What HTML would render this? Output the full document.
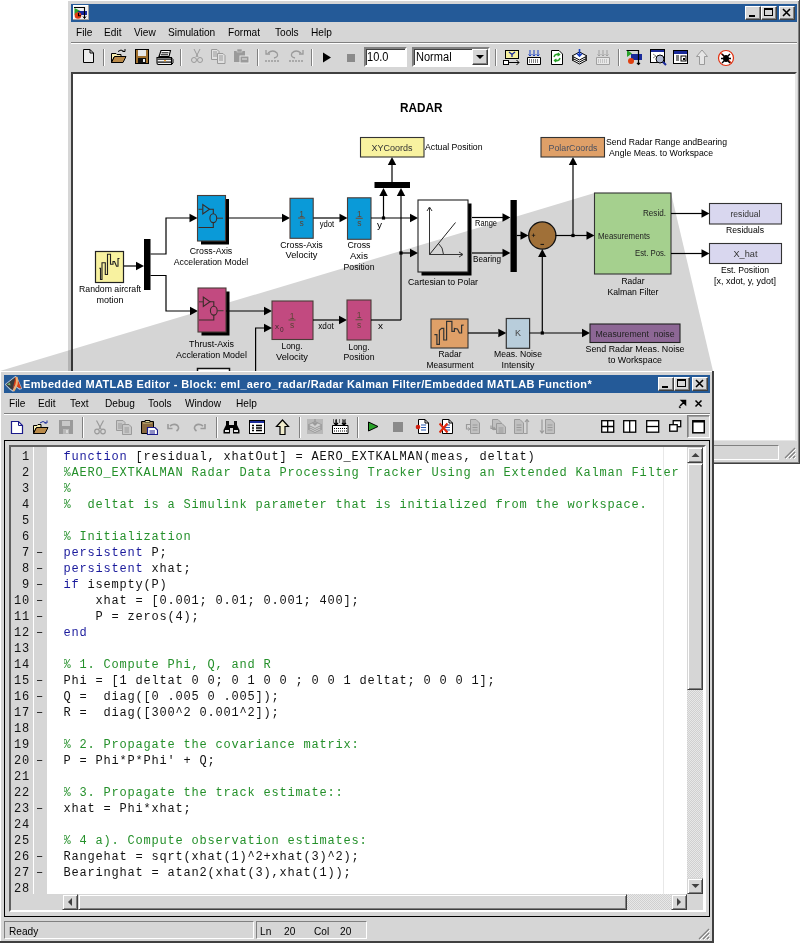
<!DOCTYPE html>
<html><head><meta charset="utf-8">
<style>
*{margin:0;padding:0;box-sizing:border-box}
html,body{width:800px;height:943px;overflow:hidden;background:#fff;font-family:"Liberation Sans",sans-serif;}
.abs{position:absolute}
.win{position:absolute;background:#d6d6d6;}
.title{position:absolute;background:#245a98;}
.tb{position:absolute;width:16px;height:14px;background:#d6d6d6;border:1px solid;border-color:#fff #404040 #404040 #fff;box-shadow:inset -1px -1px 0 #808080;}
.mi{position:absolute;font-size:11px;color:#000;line-height:12px;white-space:nowrap;transform:scaleX(0.92);transform-origin:0 0}
.sep{position:absolute;height:2px;border-top:1px solid #808080;border-bottom:1px solid #fff}
.vsep{position:absolute;width:2px;border-left:1px solid #808080;border-right:1px solid #fff}
.lbl{position:absolute;font-size:10px;line-height:11px;color:#000;white-space:nowrap;text-align:center}
.code{position:absolute;font-family:"Liberation Mono",monospace;font-size:12px;letter-spacing:0.8px;line-height:16px;white-space:pre;color:#111}
.ln{position:absolute;font-family:"Liberation Mono",monospace;font-size:12px;letter-spacing:0.8px;line-height:16px;white-space:pre;text-align:right;color:#111}
.ttl{position:absolute;font-size:11px;font-weight:bold;color:#fff;line-height:12px;white-space:nowrap;letter-spacing:0.35px}
.k{color:#0000ff}
.c{color:#228b22}
</style></head>
<body>
<!-- ================= SIMULINK WINDOW ================= -->
<div class="win" style="left:67px;top:0;width:733px;height:464px;border-right:1px solid #404040;border-bottom:1px solid #404040;box-shadow:inset 1px 1px 0 #fff, inset -1px -1px 0 #808080;"></div>
<div class="title" style="left:71px;top:4px;width:726px;height:18px;"></div>
<div class="tb" style="left:745px;top:6px;"></div>
<div class="tb" style="left:761px;top:6px;"></div>
<div class="tb" style="left:779px;top:6px;"></div>
<div class="sep" style="left:71px;top:42px;width:726px"></div>

<!-- simulink title icon -->
<svg class="abs" style="left:73px;top:5px" width="16" height="15" viewBox="0 0 16 15"><rect x="0" y="0" width="16" height="15" fill="#a0a0a0"/><rect x="0" y="0" width="15" height="14" fill="#fff"/><rect x="1" y="1" width="14" height="13" fill="#f0f0f0"/><polygon points="1.5,3 1.5,10 7.5,6" fill="#2aa02a"/><rect x="5" y="6" width="9" height="4" fill="#1a2aa0"/><circle cx="5" cy="10.5" r="3.3" fill="#e03a10"/><path d="M1 2.5H11.5V13.5" stroke="#000" stroke-width="1.1" fill="none"/><path d="M10 11.5L11.5 13.5L13 11.5" stroke="#000" fill="none"/><path d="M5.5 8V10.8H8" stroke="#000" stroke-width="1.1" fill="none"/></svg>
<!-- title buttons glyphs -->
<svg class="abs" style="left:745px;top:6px" width="52" height="14" viewBox="0 0 52 14">
<rect x="4" y="9" width="6" height="2" fill="#000"/>
<rect x="19.5" y="2.5" width="8" height="7" fill="none" stroke="#000"/><rect x="19" y="2" width="9" height="2" fill="#000"/>
<path d="M38 3L45 10M45 3L38 10" stroke="#000" stroke-width="1.6"/>
</svg>
<!-- menu -->
<div class="mi" style="left:76px;top:26px">File</div>
<div class="mi" style="left:104px;top:26px">Edit</div>
<div class="mi" style="left:134px;top:26px">View</div>
<div class="mi" style="left:168px;top:26px">Simulation</div>
<div class="mi" style="left:228px;top:26px">Format</div>
<div class="mi" style="left:275px;top:26px">Tools</div>
<div class="mi" style="left:311px;top:26px">Help</div>
<!-- toolbar -->
<div class="vsep" style="left:103px;top:49px;height:17px"></div>
<div class="vsep" style="left:180px;top:49px;height:17px"></div>
<div class="vsep" style="left:257px;top:49px;height:17px"></div>
<div class="vsep" style="left:311px;top:49px;height:17px"></div>
<div class="vsep" style="left:495px;top:49px;height:17px"></div>
<div class="vsep" style="left:618px;top:49px;height:17px"></div>
<svg class="abs" style="left:80px;top:48px" width="16" height="16" viewBox="0 0 16 16"><path d="M3.5 1.5H10L13.5 5V14.5H3.5Z" fill="#ececec" stroke="#000"/><path d="M10 1.5V5H13.5" fill="none" stroke="#000"/></svg>
<svg class="abs" style="left:110px;top:48px" width="17" height="16" viewBox="0 0 17 16"><path d="M1.5 5.5H6L7 6.5H11V9H4L1.5 14.5Z" fill="#f8eeb0" stroke="#000"/><path d="M1.5 14.5L4.5 8.5H16L13 14.5Z" fill="#b98a4a" stroke="#000"/><path d="M8 3.5Q11 0.5 14 3.5" fill="none" stroke="#000"/><path d="M12.5 3.5H15V1" fill="none" stroke="#000"/></svg>
<svg class="abs" style="left:134px;top:48px" width="16" height="16" viewBox="0 0 16 16"><rect x="1" y="1" width="14" height="15" fill="#000"/><rect x="2" y="2" width="12" height="13" fill="#a0702e"/><rect x="4" y="2" width="8" height="6" fill="#e8e8e8"/><rect x="4" y="10" width="8" height="5" fill="#111"/><rect x="9" y="11" width="2" height="3" fill="#eee"/></svg>
<svg class="abs" style="left:156px;top:49px" width="18" height="17" viewBox="0 0 18 17"><path d="M5 1.5H14.5L13 7.5H3Z" fill="#fff" stroke="#000" stroke-width="1.1"/><path d="M5.5 3.8H12.5M4.8 5.8H12" stroke="#000"/><path d="M1 8.5H15.5V15.5H2.5Q1 15.5 1 14Z" fill="#f4f4f4" stroke="#000" stroke-width="1.1"/><rect x="1.5" y="9.5" width="13.5" height="1.2" fill="#000"/><rect x="1.5" y="12.5" width="13.5" height="1.2" fill="#000"/><rect x="8" y="11" width="2" height="1.3" fill="#e8a030"/><path d="M15.5 9L17 10.5V14L15.5 15.5" fill="none" stroke="#000"/></svg>
<!-- cut copy paste grey -->
<svg class="abs" style="left:189px;top:48px" width="16" height="16" viewBox="0 0 16 16" fill="none" stroke="#9a9a9a"><path d="M5 1L9 9M11 1L7 9"/><circle cx="5" cy="12" r="2.5"/><circle cx="11" cy="12" r="2.5"/></svg>
<svg class="abs" style="left:210px;top:48px" width="17" height="16" viewBox="0 0 17 16" stroke="#9a9a9a" fill="#e0e0e0"><path d="M1.5 1.5H7L9 3.5V11.5H1.5Z"/><path d="M7.5 5.5H13L15 7.5V15.5H7.5Z"/><path d="M3 4H7M3 6H7M3 8H7M9 8H13M9 10H13M9 12H13" stroke="#9a9a9a"/></svg>
<svg class="abs" style="left:233px;top:48px" width="17" height="16" viewBox="0 0 17 16"><path d="M1 3H12V14H1Z" fill="#9a9a9a"/><rect x="4" y="1" width="5" height="3" fill="#9a9a9a" stroke="#d6d6d6" stroke-width=".6"/><rect x="7" y="8" width="9" height="7" fill="#9a9a9a" stroke="#e6e6e6"/><path d="M9 11H14" stroke="#e6e6e6"/></svg>
<!-- undo redo grey -->
<svg class="abs" style="left:264px;top:48px" width="17" height="16" viewBox="0 0 17 16" fill="none" stroke="#9a9a9a" stroke-width="1.3"><path d="M4 5Q9 1 13 5Q15 9 10 10"/><path d="M2 2V6H6" /><path d="M1 13H16" stroke-dasharray="2 1"/></svg>
<svg class="abs" style="left:288px;top:48px" width="17" height="16" viewBox="0 0 17 16" fill="none" stroke="#9a9a9a" stroke-width="1.3"><path d="M13 5Q8 1 4 5Q2 9 7 10"/><path d="M15 2V6H11" /><path d="M1 13H16" stroke-dasharray="2 1"/></svg>
<!-- play stop -->
<svg class="abs" style="left:320px;top:50px" width="14" height="14" viewBox="0 0 14 14"><path d="M3 2.5L11 7.5L3 12.5Z" fill="#000"/></svg>
<div class="abs" style="left:347px;top:54px;width:8px;height:8px;background:#8a8a8a"></div>
<!-- edit field -->
<div class="abs" style="left:364px;top:47px;width:43px;height:20px;background:#fff;border:2px solid;border-color:#808080 #fff #fff #808080;box-shadow:inset 1px 1px 0 #404040"></div>
<div class="mi" style="left:367px;top:51px;font-size:12px">10.0</div>
<div class="abs" style="left:412px;top:47px;width:78px;height:20px;background:#fff;border:2px solid;border-color:#808080 #fff #fff #808080;box-shadow:inset 1px 1px 0 #404040"></div>
<div class="mi" style="left:416px;top:51px;font-size:12px">Normal</div>
<div class="abs" style="left:472px;top:49px;width:16px;height:16px;background:#d6d6d6;border:1px solid;border-color:#fff #404040 #404040 #fff;box-shadow:inset -1px -1px 0 #808080"></div>
<svg class="abs" style="left:474px;top:51px" width="12" height="12" viewBox="0 0 12 12"><path d="M2 4H10L6 8Z" fill="#000"/></svg>
<!-- right icons -->
<svg class="abs" style="left:503px;top:49px" width="18" height="17" viewBox="0 0 18 17"><rect x="2.5" y="1.5" width="13" height="8" fill="#f5f0a0" stroke="#000"/><path d="M6 3L9 5.5L12 3M9 5.5V8" stroke="#1a2a9a" stroke-width="1.3" fill="none"/><rect x="0.5" y="11.5" width="5" height="4" fill="#fff" stroke="#000"/><path d="M6 13.5H16M13.5 11L16 13.5L13.5 16" stroke="#000" fill="none"/></svg>
<svg class="abs" style="left:525px;top:49px" width="18" height="17" viewBox="0 0 18 17"><path d="M2.5 8.5H15.5V15.5H2.5Z" fill="#fff" stroke="#000"/><path d="M4 11H14M4 13H14" stroke="#000" stroke-dasharray="1 1"/><path d="M5 1V7M3.5 5.5L5 7L6.5 5.5M9 1V7M7.5 5.5L9 7L10.5 5.5M13 1V7M11.5 5.5L13 7L14.5 5.5" stroke="#1a40c0" fill="none"/></svg>
<svg class="abs" style="left:549px;top:49px" width="16" height="17" viewBox="0 0 16 17"><path d="M2.5 1.5H10L13.5 5V15.5H2.5Z" fill="#fff" stroke="#000"/><path d="M5 8Q6 4.5 10 5.5M9 4L10.5 5.7L8.5 7M11 9Q10 12.5 6 11.5M7 13L5.5 11.3L7.5 10" stroke="#28a028" stroke-width="1.4" fill="none"/></svg>
<svg class="abs" style="left:571px;top:49px" width="17" height="17" viewBox="0 0 17 17"><path d="M1 11L8.5 15L16 11L8.5 7Z" fill="#fff" stroke="#000"/><path d="M1 9L8.5 13L16 9L8.5 5Z" fill="#fff" stroke="#000"/><path d="M1 7L8.5 11L16 7L8.5 3Z" fill="#fff" stroke="#000"/><path d="M8.5 0V7M6 4.5L8.5 7L11 4.5" stroke="#1a40c0" stroke-width="1.6" fill="none"/></svg>
<svg class="abs" style="left:594px;top:49px" width="18" height="17" viewBox="0 0 18 17"><path d="M2.5 8.5H15.5V15.5H2.5Z" fill="#e8e8e8" stroke="#a0a0a0"/><path d="M4 11H14M4 13H14" stroke="#a0a0a0" stroke-dasharray="1 1"/><path d="M5 1V7M3.5 5.5L5 7L6.5 5.5M9 1V7M7.5 5.5L9 7L10.5 5.5M13 1V7M11.5 5.5L13 7L14.5 5.5" stroke="#a0a0a0" fill="none"/></svg>
<svg class="abs" style="left:626px;top:49px" width="18" height="17" viewBox="0 0 18 17"><path d="M1 1V8L6 4.5Z" fill="#28a028"/><rect x="5" y="5" width="11" height="6" fill="#1a2a9a"/><circle cx="5" cy="12" r="3" fill="#e04010"/><path d="M0.5 1.5H12.5V15.5M11 14L12.5 15.5L14 14" stroke="#000" stroke-width="1.2" fill="none"/></svg>
<svg class="abs" style="left:650px;top:49px" width="17" height="17" viewBox="0 0 17 17"><rect x="0.5" y="0.5" width="14" height="13" fill="#fff" stroke="#000"/><rect x="1" y="1" width="13" height="2" fill="#1a2a9a"/><circle cx="10" cy="10" r="4" fill="#b0b8d0" stroke="#000"/><path d="M13 13L16 16" stroke="#1a2a9a" stroke-width="2"/><path d="M3 5L6 7L3 9" stroke="#888" fill="none"/></svg>
<svg class="abs" style="left:673px;top:49px" width="16" height="17" viewBox="0 0 16 17"><rect x="0.5" y="1.5" width="14" height="13" fill="#fff" stroke="#000"/><rect x="1" y="2" width="13" height="3" fill="#1a2a9a"/><path d="M3 7H6M3 9H6M3 11H6" stroke="#000"/><rect x="8" y="7" width="5" height="5" fill="none" stroke="#000"/><rect x="10" y="9" width="2" height="2" fill="#000"/></svg>
<svg class="abs" style="left:695px;top:49px" width="14" height="17" viewBox="0 0 14 17"><path d="M7 1L12.5 7.5H9.5V15.5H4.5V7.5H1.5Z" fill="#e6e6e6" stroke="#9a9a9a"/></svg>
<svg class="abs" style="left:716px;top:49px" width="20" height="18" viewBox="0 0 20 18"><circle cx="10" cy="9" r="7.5" fill="#fff" stroke="#e03010" stroke-width="1.2"/><path d="M4.5 4L15.5 14" stroke="#e03010" stroke-width="1.2"/><ellipse cx="10" cy="9.5" rx="3" ry="3.5" fill="#000"/><path d="M6 5L8 7M14 5L12 7M5 9.5H7M13 9.5H15M6 14L8 12M14 14L12 12" stroke="#000" stroke-width="1.4"/></svg>
<!-- simulink status bar -->
<div class="abs" style="left:71px;top:445px;width:708px;height:15px;border:1px solid;border-color:#808080 #fff #fff #808080"></div>
<svg class="abs" style="left:783px;top:446px" width="14" height="14" viewBox="0 0 14 14"><path d="M12 2L2 12M12 6L6 12M12 10L10 12" stroke="#808080" stroke-width="1.2"/><path d="M13 3L3 13M13 7L7 13M13 11L11 13" stroke="#fff" stroke-width="1"/></svg>

<!-- canvas -->
<div class="abs" style="left:71px;top:72px;width:726px;height:369px;background:#fff;border-top:2px solid #404040;border-left:2px solid #404040;border-right:2px solid #e6e6e6;border-bottom:1px solid #e6e6e6"></div>

<svg class="abs" style="left:0;top:0;mix-blend-mode:multiply" width="800" height="380"><polygon points="0,371 594.5,193 671,193 713,371" fill="#d5d5d5"/></svg>
<svg class="abs" style="left:0;top:0;font-family:'Liberation Sans',sans-serif" width="800" height="441" viewBox="0 0 800 441"><text x="421.2" y="111.92" font-size="13.5" text-anchor="middle" fill="#000" font-weight="bold" textLength="42.5" lengthAdjust="spacingAndGlyphs">RADAR</text>
<rect x="95.5" y="251.5" width="28" height="31" fill="#f8f2a0" stroke="#222" stroke-width="1.2"/>
<polyline points="99.3,268.3 100.5,268.3 100.5,279.5 102,279.5 102,262.8 105.3,262.8 105.3,274.5 107.5,274.5 107.5,254.3 110.5,254.3 110.5,264.3 113,264.3 113,261.5 114.5,261.5 116.5,266.3 118,266.3 118,258.5 119.5,258.5" fill="none" stroke="#222" stroke-width="1.1"/>
<text x="110" y="292.00" font-size="9.6" text-anchor="middle" fill="#000" font-weight="normal" textLength="62" lengthAdjust="spacingAndGlyphs">Random aircraft</text>
<text x="110" y="302.50" font-size="9.6" text-anchor="middle" fill="#000" font-weight="normal" textLength="27" lengthAdjust="spacingAndGlyphs">motion</text>
<polyline points="124,266 138,266" fill="none" stroke="#000" stroke-width="1.2"/>
<polygon points="144,266 136,261.8 136,270.2" fill="#000"/>
<rect x="144" y="239" width="6.5" height="51" fill="#000"/>
<polyline points="150.5,254 166,254 166,218 190,218" fill="none" stroke="#000" stroke-width="1.2"/>
<polygon points="197.5,218 189.5,213.8 189.5,222.2" fill="#000"/>
<polyline points="150.5,275.5 166,275.5 166,311 190,311" fill="none" stroke="#000" stroke-width="1.2"/>
<polygon points="198,311 190,306.8 190,315.2" fill="#000"/>
<rect x="201.0" y="199.0" width="28" height="45.5" fill="#000"/>
<rect x="197.5" y="195.5" width="28" height="45.5" fill="#0a9ad8" stroke="#4a3c38" stroke-width="1.1"/>
<polyline points="198.5,209.3 202.5,209.3" stroke="#4a3c38" stroke-width="1.1" fill="none"/>
<polygon points="202.8,204.5 202.8,214.0 209.5,209.3" fill="none" stroke="#3a2c28" stroke-width="1.1"/>
<polyline points="209.5,209.3 213.3,209.3 213.3,213.8" stroke="#3a2c28" stroke-width="1.1" fill="none"/>
<ellipse cx="213.3" cy="218.2" rx="3.4" ry="4.4" fill="none" stroke="#3a2c28" stroke-width="1.1"/>
<polyline points="216.7,218.2 223.0,218.2" stroke="#4a3c38" stroke-width="1.1" fill="none"/>
<polyline points="198.5,227.5 213.3,227.5 213.3,222.6" stroke="#3a2c28" stroke-width="1.1" fill="none"/>
<text x="211" y="254.00" font-size="9.6" text-anchor="middle" fill="#000" font-weight="normal" textLength="42.5" lengthAdjust="spacingAndGlyphs">Cross-Axis</text>
<text x="211" y="264.50" font-size="9.6" text-anchor="middle" fill="#000" font-weight="normal" textLength="74.5" lengthAdjust="spacingAndGlyphs">Acceleration Model</text>
<rect x="201.5" y="291.5" width="28" height="44" fill="#000"/>
<rect x="198" y="288" width="28" height="44" fill="#c24a80" stroke="#4a3c38" stroke-width="1.1"/>
<polyline points="199,301.8 203,301.8" stroke="#4a3c38" stroke-width="1.1" fill="none"/>
<polygon points="203.3,297 203.3,306.5 210,301.8" fill="none" stroke="#3a2c28" stroke-width="1.1"/>
<polyline points="210,301.8 213.8,301.8 213.8,306.3" stroke="#3a2c28" stroke-width="1.1" fill="none"/>
<ellipse cx="213.8" cy="310.7" rx="3.4" ry="4.4" fill="none" stroke="#3a2c28" stroke-width="1.1"/>
<polyline points="217.2,310.7 223.5,310.7" stroke="#4a3c38" stroke-width="1.1" fill="none"/>
<polyline points="199,320 213.8,320 213.8,315.1" stroke="#3a2c28" stroke-width="1.1" fill="none"/>
<text x="211.5" y="347.00" font-size="9.6" text-anchor="middle" fill="#000" font-weight="normal" textLength="45" lengthAdjust="spacingAndGlyphs">Thrust-Axis</text>
<text x="211.5" y="357.50" font-size="9.6" text-anchor="middle" fill="#000" font-weight="normal" textLength="71" lengthAdjust="spacingAndGlyphs">Accleration Model</text>
<polyline points="226,218 282,218" fill="none" stroke="#000" stroke-width="1.2"/>
<polygon points="290,218 282,213.8 282,222.2" fill="#000"/>
<rect x="290" y="198.3" width="23.2" height="40" fill="#0a9ad8" stroke="#4a3c38" stroke-width="1.1"/>
<text x="301.6" y="216.7" font-size="8.5" text-anchor="middle" fill="#5a4535">1</text>
<rect x="298.1" y="217.4" width="7" height="1.2" fill="#6a5545"/>
<text x="301.6" y="225.9" font-size="8.5" text-anchor="middle" fill="#5a4535">s</text>
<text x="301.5" y="247.50" font-size="9.6" text-anchor="middle" fill="#000" font-weight="normal" textLength="42.5" lengthAdjust="spacingAndGlyphs">Cross-Axis</text>
<text x="301.5" y="258.00" font-size="9.6" text-anchor="middle" fill="#000" font-weight="normal" textLength="32" lengthAdjust="spacingAndGlyphs">Velocity</text>
<polyline points="313.3,218 340,218" fill="none" stroke="#000" stroke-width="1.2"/>
<polygon points="347.5,218 339.5,213.8 339.5,222.2" fill="#000"/>
<text x="327" y="227.28" font-size="9" text-anchor="middle" fill="#000" font-weight="normal" textLength="14.5" lengthAdjust="spacingAndGlyphs">ydot</text>
<rect x="347.5" y="197.8" width="23.5" height="41.5" fill="#0a9ad8" stroke="#4a3c38" stroke-width="1.1"/>
<text x="359.25" y="217.0" font-size="8.5" text-anchor="middle" fill="#5a4535">1</text>
<rect x="355.75" y="217.7" width="7" height="1.2" fill="#6a5545"/>
<text x="359.25" y="226.2" font-size="8.5" text-anchor="middle" fill="#5a4535">s</text>
<text x="359" y="248.00" font-size="9.6" text-anchor="middle" fill="#000" font-weight="normal" textLength="23" lengthAdjust="spacingAndGlyphs">Cross</text>
<text x="359" y="259.00" font-size="9.6" text-anchor="middle" fill="#000" font-weight="normal" textLength="18" lengthAdjust="spacingAndGlyphs">Axis</text>
<text x="359" y="270.00" font-size="9.6" text-anchor="middle" fill="#000" font-weight="normal" textLength="31" lengthAdjust="spacingAndGlyphs">Position</text>
<polyline points="371,218 410,218" fill="none" stroke="#000" stroke-width="1.2"/>
<polygon points="418,218 410,213.8 410,222.2" fill="#000"/>
<text x="379.5" y="227.78" font-size="9" text-anchor="middle" fill="#000" font-weight="normal" textLength="5" lengthAdjust="spacingAndGlyphs">y</text>
<rect x="381.9" y="216.4" width="3.2" height="3.2" fill="#000"/>
<polyline points="383.5,218 383.5,196" fill="none" stroke="#000" stroke-width="1.2"/>
<polygon points="383.5,188 379.3,196 387.7,196" fill="#000"/>
<polyline points="401,320 401,196" fill="none" stroke="#000" stroke-width="1.2"/>
<polygon points="401,188 396.8,196 405.2,196" fill="#000"/>
<rect x="399.4" y="251.4" width="3.2" height="3.2" fill="#000"/>
<polyline points="401,253 410,253" fill="none" stroke="#000" stroke-width="1.2"/>
<polygon points="418,253 410,248.8 410,257.2" fill="#000"/>
<rect x="374.5" y="182" width="35.5" height="6" fill="#000"/>
<polyline points="392,182 392,165" fill="none" stroke="#000" stroke-width="1.2"/>
<polygon points="392,157 387.8,165 396.2,165" fill="#000"/>
<rect x="360.5" y="137.5" width="63.5" height="19.5" fill="#f8f2a0" stroke="#333" stroke-width="1.1"/>
<text x="392" y="150.50" font-size="9.6" text-anchor="middle" fill="#333" font-weight="normal" textLength="41" lengthAdjust="spacingAndGlyphs">XYCoords</text>
<text x="425" y="150.00" font-size="9.6" text-anchor="start" fill="#000" font-weight="normal" textLength="57.5" lengthAdjust="spacingAndGlyphs">Actual Position</text>
<path d="M468 203.5H471.5V275.5H421.5V272H468Z" fill="#000"/>
<rect x="418" y="200" width="50" height="72" fill="none" stroke="#222" stroke-width="1.1"/>
<polyline points="429.5,208 429.5,254.5 462,254.5" fill="none" stroke="#333" stroke-width="1"/>
<polyline points="427,211 429.5,207 432,211" fill="none" stroke="#333" stroke-width="1"/>
<polyline points="459,252 463,254.5 459,257" fill="none" stroke="#333" stroke-width="1"/>
<line x1="429.5" y1="254.5" x2="455.5" y2="222.5" stroke="#222" stroke-width="1"/>
<path d="M438.5 243.5 Q443 247 443.5 254.5" fill="none" stroke="#333" stroke-width="1"/>
<text x="443" y="285.00" font-size="9.6" text-anchor="middle" fill="#000" font-weight="normal" textLength="70" lengthAdjust="spacingAndGlyphs">Cartesian to Polar</text>
<polyline points="472,217.5 503,217.5" fill="none" stroke="#000" stroke-width="1.2"/>
<polygon points="510.5,217.5 502.5,213.3 502.5,221.7" fill="#000"/>
<text x="486" y="226.28" font-size="9" text-anchor="middle" fill="#000" font-weight="normal" textLength="22" lengthAdjust="spacingAndGlyphs">Range</text>
<polyline points="472,253 503,253" fill="none" stroke="#000" stroke-width="1.2"/>
<polygon points="510.5,253 502.5,248.8 502.5,257.2" fill="#000"/>
<text x="487" y="261.78" font-size="9" text-anchor="middle" fill="#000" font-weight="normal" textLength="28" lengthAdjust="spacingAndGlyphs">Bearing</text>
<rect x="510.5" y="200" width="6.3" height="72" fill="#000"/>
<polyline points="516.8,235.5 521,235.5" fill="none" stroke="#000" stroke-width="1.2"/>
<polygon points="528.5,235.5 520.5,231.3 520.5,239.7" fill="#000"/>
<circle cx="542.3" cy="235.5" r="13.6" fill="#a07038" stroke="#111" stroke-width="1.3"/>
<path d="M531.8 235.3 H535.2 M533.5 233.5 V237.1" stroke="#111" stroke-width="0.7"/>
<path d="M540.5 244.4 H544" stroke="#111" stroke-width="1"/>
<polyline points="555.5,235.5 587,235.5" fill="none" stroke="#000" stroke-width="1.2"/>
<polygon points="594.5,235.5 586.5,231.3 586.5,239.7" fill="#000"/>
<rect x="571.4" y="233.9" width="3.2" height="3.2" fill="#000"/>
<polyline points="573,235.5 573,165" fill="none" stroke="#000" stroke-width="1.2"/>
<polygon points="573,157 568.8,165 577.2,165" fill="#000"/>
<rect x="541" y="137.5" width="63.5" height="19.5" fill="#dfa068" stroke="#333" stroke-width="1.1"/>
<text x="573" y="150.50" font-size="9.6" text-anchor="middle" fill="#4a5060" font-weight="normal" textLength="49" lengthAdjust="spacingAndGlyphs">PolarCoords</text>
<text x="606" y="145.00" font-size="9.6" text-anchor="start" fill="#000" font-weight="normal" textLength="121" lengthAdjust="spacingAndGlyphs">Send Radar Range andBearing</text>
<text x="609" y="155.50" font-size="9.6" text-anchor="start" fill="#000" font-weight="normal" textLength="104" lengthAdjust="spacingAndGlyphs">Angle Meas. to Workspace</text>
<rect x="594.5" y="193" width="76.5" height="81" fill="#a5d08e" stroke="#333" stroke-width="1.1"/>
<text x="666" y="216.28" font-size="9" text-anchor="end" fill="#222" font-weight="normal" textLength="23" lengthAdjust="spacingAndGlyphs">Resid.</text>
<text x="598" y="238.78" font-size="9" text-anchor="start" fill="#222" font-weight="normal" textLength="52" lengthAdjust="spacingAndGlyphs">Measurements</text>
<text x="666" y="256.28" font-size="9" text-anchor="end" fill="#222" font-weight="normal" textLength="31" lengthAdjust="spacingAndGlyphs">Est. Pos.</text>
<text x="633" y="284.00" font-size="9.6" text-anchor="middle" fill="#000" font-weight="normal" textLength="23" lengthAdjust="spacingAndGlyphs">Radar</text>
<text x="633" y="294.50" font-size="9.6" text-anchor="middle" fill="#000" font-weight="normal" textLength="51" lengthAdjust="spacingAndGlyphs">Kalman Filter</text>
<polyline points="671,213.5 702,213.5" fill="none" stroke="#000" stroke-width="1.2"/>
<polygon points="709.5,213.5 701.5,209.3 701.5,217.7" fill="#000"/>
<rect x="709.5" y="203.5" width="72" height="20.5" fill="#d9d7ef" stroke="#333" stroke-width="1.1"/>
<text x="745.5" y="216.50" font-size="9.6" text-anchor="middle" fill="#333" font-weight="normal" textLength="30" lengthAdjust="spacingAndGlyphs">residual</text>
<text x="745" y="233.00" font-size="9.6" text-anchor="middle" fill="#000" font-weight="normal" textLength="38" lengthAdjust="spacingAndGlyphs">Residuals</text>
<polyline points="671,253.5 702,253.5" fill="none" stroke="#000" stroke-width="1.2"/>
<polygon points="709.5,253.5 701.5,249.3 701.5,257.7" fill="#000"/>
<rect x="709.5" y="243.5" width="72" height="20" fill="#d9d7ef" stroke="#333" stroke-width="1.1"/>
<text x="745.5" y="256.50" font-size="9.6" text-anchor="middle" fill="#333" font-weight="normal" textLength="24" lengthAdjust="spacingAndGlyphs">X_hat</text>
<text x="745" y="273.00" font-size="9.6" text-anchor="middle" fill="#000" font-weight="normal" textLength="48" lengthAdjust="spacingAndGlyphs">Est. Position</text>
<text x="745" y="284.00" font-size="9.6" text-anchor="middle" fill="#000" font-weight="normal" textLength="62" lengthAdjust="spacingAndGlyphs">[x, xdot, y, ydot]</text>
<rect x="431" y="319" width="37" height="29" fill="#dfa068" stroke="#333" stroke-width="1.1"/>
<polyline points="434.4,334.7 436.9,334.7 436.9,344.4 439.4,344.4 439.4,330.3 441.6,328.4 443.75,328.4 443.75,340 446.6,340 446.6,321.3 451.9,321.3 451.9,331.3 454.4,331.3 454.4,328.4 457.5,329 459.4,333 461.6,333 461.6,325.3 463.75,325" fill="none" stroke="#333" stroke-width="1.2"/>
<text x="450" y="357.00" font-size="9.6" text-anchor="middle" fill="#000" font-weight="normal" textLength="23" lengthAdjust="spacingAndGlyphs">Radar</text>
<text x="450" y="368.00" font-size="9.6" text-anchor="middle" fill="#000" font-weight="normal" textLength="47" lengthAdjust="spacingAndGlyphs">Measurment</text>
<polyline points="468,333 498,333" fill="none" stroke="#000" stroke-width="1.2"/>
<polygon points="506.3,333 498.3,328.8 498.3,337.2" fill="#000"/>
<rect x="506.3" y="318.5" width="23.3" height="29.8" fill="#b8cddb" stroke="#333" stroke-width="1.2"/>
<text x="518" y="335.78" font-size="9" text-anchor="middle" fill="#444" font-weight="normal" textLength="6" lengthAdjust="spacingAndGlyphs">K</text>
<text x="518" y="357.00" font-size="9.6" text-anchor="middle" fill="#000" font-weight="normal" textLength="48" lengthAdjust="spacingAndGlyphs">Meas. Noise</text>
<text x="518" y="368.00" font-size="9.6" text-anchor="middle" fill="#000" font-weight="normal" textLength="33" lengthAdjust="spacingAndGlyphs">Intensity</text>
<polyline points="529.6,333 582,333" fill="none" stroke="#000" stroke-width="1.2"/>
<polygon points="590,333 582,328.8 582,337.2" fill="#000"/>
<rect x="540.6999999999999" y="331.4" width="3.2" height="3.2" fill="#000"/>
<polyline points="542.3,333 542.3,257" fill="none" stroke="#000" stroke-width="1.2"/>
<polygon points="542.3,249 538.0999999999999,257 546.5,257" fill="#000"/>
<rect x="590" y="324" width="90" height="18.5" fill="#8d6795" stroke="#222" stroke-width="1.1"/>
<text x="635" y="336.50" font-size="9.6" text-anchor="middle" fill="#222" font-weight="normal" textLength="79" lengthAdjust="spacingAndGlyphs">Measurement&#160; noise</text>
<text x="635" y="352.00" font-size="9.6" text-anchor="middle" fill="#000" font-weight="normal" textLength="99" lengthAdjust="spacingAndGlyphs">Send Radar Meas. Noise</text>
<text x="635" y="363.00" font-size="9.6" text-anchor="middle" fill="#000" font-weight="normal" textLength="54" lengthAdjust="spacingAndGlyphs">to Workspace</text>
<polyline points="226,311 264,311" fill="none" stroke="#000" stroke-width="1.2"/>
<polygon points="272,311 264,306.8 264,315.2" fill="#000"/>
<rect x="272" y="301" width="41" height="38.5" fill="#c24a80" stroke="#4a3c38" stroke-width="1.1"/>
<text x="292" y="318.6" font-size="8.5" text-anchor="middle" fill="#5a4535">1</text>
<rect x="288.5" y="319.4" width="7" height="1.2" fill="#6a5545"/>
<text x="292" y="327.9" font-size="8.5" text-anchor="middle" fill="#5a4535">s</text>
<text x="275" y="329" font-size="8" fill="#3a2c28">x</text><text x="280" y="332" font-size="6.5" fill="#3a2c28">0</text>
<text x="292" y="349.00" font-size="9.6" text-anchor="middle" fill="#000" font-weight="normal" textLength="21" lengthAdjust="spacingAndGlyphs">Long.</text>
<text x="292" y="359.50" font-size="9.6" text-anchor="middle" fill="#000" font-weight="normal" textLength="32" lengthAdjust="spacingAndGlyphs">Velocity</text>
<polyline points="255.6,371 255.6,328 264,328" fill="none" stroke="#000" stroke-width="1.2"/>
<polygon points="272,328 264,323.8 264,332.2" fill="#000"/>
<polyline points="313,320 339,320" fill="none" stroke="#000" stroke-width="1.2"/>
<polygon points="347,320 339,315.8 339,324.2" fill="#000"/>
<text x="326" y="328.78" font-size="9" text-anchor="middle" fill="#000" font-weight="normal" textLength="15.5" lengthAdjust="spacingAndGlyphs">xdot</text>
<rect x="347" y="300" width="24" height="40" fill="#c24a80" stroke="#4a3c38" stroke-width="1.1"/>
<text x="359.0" y="318.4" font-size="8.5" text-anchor="middle" fill="#5a4535">1</text>
<rect x="355.5" y="319.1" width="7" height="1.2" fill="#6a5545"/>
<text x="359.0" y="327.6" font-size="8.5" text-anchor="middle" fill="#5a4535">s</text>
<text x="359" y="350.00" font-size="9.6" text-anchor="middle" fill="#000" font-weight="normal" textLength="21" lengthAdjust="spacingAndGlyphs">Long.</text>
<text x="359" y="360.00" font-size="9.6" text-anchor="middle" fill="#000" font-weight="normal" textLength="31" lengthAdjust="spacingAndGlyphs">Position</text>
<polyline points="371,320 401,320" fill="none" stroke="#000" stroke-width="1.2"/>
<text x="380.5" y="328.78" font-size="9" text-anchor="middle" fill="#000" font-weight="normal" textLength="5" lengthAdjust="spacingAndGlyphs">x</text>
<rect x="197.5" y="368.5" width="32" height="10" fill="#fff" stroke="#111" stroke-width="1.5"/></svg>
<!-- ================= EDITOR WINDOW ================= -->
<div class="win" style="left:0;top:371px;width:714px;height:572px;border-right:2px solid #404040;box-shadow:inset 1px 1px 0 #fff;"></div>
<div class="title" style="left:4px;top:375px;width:706px;height:18px;"></div>
<div class="tb" style="left:658px;top:377px;"></div>
<div class="tb" style="left:674px;top:377px;"></div>
<div class="tb" style="left:692px;top:377px;"></div>
<div class="sep" style="left:4px;top:413px;width:706px"></div>
<!-- editor frame -->
<div class="abs" style="left:4px;top:440px;width:706px;height:477px;border:1px solid #000;"></div>
<div class="abs" style="left:9px;top:445px;width:697px;height:467px;border-top:2px solid #606060;border-left:2px solid #606060;border-right:2px solid #fff;border-bottom:2px solid #fff;background:#fff"></div>
<div class="abs" style="left:11px;top:447px;width:22px;height:447px;background:#d6d6d6"></div>
<div class="abs" style="left:34px;top:447px;width:13px;height:447px;background:#d6d6d6"></div>
<div class="abs" style="left:0;top:941px;width:714px;height:2px;background:#404040"></div>
<svg class="abs" style="left:5px;top:376px" width="17" height="16" viewBox="0 0 17 16"><path d="M0.5 8.5L10.5 0.5L12 2L16.5 12.5L14.5 13L10.5 10L8 15L5 13Z" fill="none" stroke="#f0f0f0" stroke-width="1.2" opacity="0.7"/><polygon points="1,8.5 10.5,1 11,4 7.5,14 5,12" fill="#3a3a3a"/><polygon points="2,8.5 5,6.5 5.5,9.5" fill="#70b070"/><polygon points="10.5,1 12,2 16.5,12.5 14,12 10,9 7.5,14" fill="#d8401a"/><path d="M11.5 1Q13.5 7 8.5 15" fill="none" stroke="#f0b070" stroke-width="2"/></svg>
<div class="abs ttl" style="left:23px;top:378px">Embedded MATLAB Editor - Block: eml_aero_radar/Radar Kalman Filter/Embedded MATLAB Function*</div>
<svg class="abs" style="left:658px;top:377px" width="52" height="14" viewBox="0 0 52 14">
<rect x="4" y="9" width="6" height="2" fill="#000"/>
<rect x="19.5" y="2.5" width="8" height="7" fill="none" stroke="#000"/><rect x="19" y="2" width="9" height="2" fill="#000"/>
<path d="M38 3L45 10M45 3L38 10" stroke="#000" stroke-width="1.6"/></svg>
<div class="mi" style="left:9px;top:397px">File</div>
<div class="mi" style="left:38px;top:397px">Edit</div>
<div class="mi" style="left:70px;top:397px">Text</div>
<div class="mi" style="left:104.5px;top:397px">Debug</div>
<div class="mi" style="left:148px;top:397px">Tools</div>
<div class="mi" style="left:185px;top:397px">Window</div>
<div class="mi" style="left:235.5px;top:397px">Help</div>
<svg class="abs" style="left:677px;top:398px" width="30" height="11" viewBox="0 0 30 11"><path d="M3 8L7 4M4.5 2.5H8.5V6.5Z" stroke="#000" stroke-width="1.5" fill="#000"/><path d="M2 8.5 L3.5 10" stroke="#000" stroke-width="1.2"/><path d="M18.5 2.5L24.5 8.5M24.5 2.5L18.5 8.5" stroke="#000" stroke-width="1.5"/></svg>
<div class="vsep" style="left:82px;top:417px;height:21px"></div>
<div class="vsep" style="left:216px;top:417px;height:21px"></div>
<div class="vsep" style="left:298.5px;top:417px;height:21px"></div>
<div class="vsep" style="left:356.5px;top:417px;height:21px"></div>
<svg class="abs" style="left:10px;top:420px" width="14" height="15" viewBox="0 0 14 15"><path d="M1.5 1.5H8.5L12.5 5.5V13.5H1.5Z" fill="#fff" stroke="#1a1a8a" stroke-width="1.2"/><path d="M8.5 1.5V5.5H12.5" fill="none" stroke="#1a1a8a"/></svg>
<svg class="abs" style="left:32px;top:420px" width="17" height="15" viewBox="0 0 17 15"><path d="M1.5 5.5H5L6 4.5H9V8H4L1.5 13.5Z" fill="#f8eeb0" stroke="#000"/><path d="M1.5 13.5L4.5 7.5H16L13 13.5Z" fill="#b98a4a" stroke="#000"/><path d="M8 3Q11 0 14 3" fill="none" stroke="#1a2a9a"/><path d="M12.5 3H15V0.5" fill="none" stroke="#1a2a9a"/></svg>
<svg class="abs" style="left:59px;top:420px" width="14" height="14" viewBox="0 0 14 14"><rect x="0" y="0" width="14" height="14" fill="#9a9a9a"/><rect x="3" y="1" width="8" height="5" fill="#c8c8c8"/><rect x="4" y="9" width="6" height="5" fill="#b8b8b8"/><rect x="7" y="10" width="2" height="3" fill="#d8d8d8"/></svg>
<svg class="abs" style="left:94px;top:420px" width="12" height="15" viewBox="0 0 12 15" fill="none" stroke="#9a9a9a" stroke-width="1.2"><path d="M2.5 0.5L7 9M9.5 0.5L5 9"/><circle cx="3" cy="11.5" r="2.3"/><circle cx="9" cy="11.5" r="2.3"/></svg>
<svg class="abs" style="left:116px;top:420px" width="17" height="15" viewBox="0 0 17 15"><path d="M0.5 0.5H7L9 2.5V10.5H0.5Z" fill="#c8c8c8" stroke="#9a9a9a"/><path d="M6.5 4.5H13L15.5 7V14.5H6.5Z" fill="#c8c8c8" stroke="#9a9a9a"/><path d="M2 4H6M2 6H6M2 8H6M8.5 8H13M8.5 10H13M8.5 12H13" stroke="#9a9a9a"/></svg>
<svg class="abs" style="left:141px;top:419px" width="17" height="16" viewBox="0 0 17 16"><path d="M0.5 2.5H12.5V14.5H0.5Z" fill="#8a6a40" stroke="#000"/><path d="M4 3.5V1.5H9V3.5Z" fill="#e8e0a0" stroke="#000"/><path d="M2 4H11" stroke="#d0c080"/><path d="M6.5 8.5H14L16.5 11V15.5H6.5Z" fill="#fff" stroke="#1a1a8a" stroke-width="1.2"/><path d="M8.5 12H14M8.5 14H14" stroke="#1a1a8a"/></svg>
<svg class="abs" style="left:167px;top:423px" width="14" height="9" viewBox="0 0 14 9" fill="none" stroke="#9a9a9a" stroke-width="1.6"><path d="M3 3Q7 0 10.5 2.5Q13 5.5 9.5 8"/><path d="M1 1V5.5H5.5"/></svg>
<svg class="abs" style="left:192px;top:423px" width="14" height="9" viewBox="0 0 14 9" fill="none" stroke="#9a9a9a" stroke-width="1.6"><path d="M11 3Q7 0 3.5 2.5Q1 5.5 4.5 8"/><path d="M13 1V5.5H8.5"/></svg>
<svg class="abs" style="left:223px;top:420px" width="17" height="14" viewBox="0 0 17 14"><path d="M3 1H6V5H11V1H14V5L16.5 10V13.5H10V8H7V13.5H0.5V10L3 5Z" fill="#000"/><rect x="2" y="10" width="4" height="2" fill="#e8e8e8"/><rect x="11" y="10" width="4" height="2" fill="#e8e8e8"/></svg>
<svg class="abs" style="left:249px;top:420px" width="16" height="14" viewBox="0 0 16 14"><rect x="0.5" y="0.5" width="15" height="13" fill="#fff" stroke="#000"/><rect x="1" y="1" width="14" height="2" fill="#1a2a9a"/><path d="M3 5.5H5M3 8H5M3 10.5H5M7 5.5H13M7 8H13M7 10.5H13" stroke="#000" stroke-width="1.3"/></svg>
<svg class="abs" style="left:275px;top:419px" width="15" height="17" viewBox="0 0 15 17"><path d="M7.5 1L13.5 7.5H10V15.5H5V7.5H1.5Z" fill="#f0eccc" stroke="#000" stroke-width="1.2"/></svg>
<svg class="abs" style="left:307px;top:419px" width="16" height="15" viewBox="0 0 16 15"><rect x="0" y="0" width="16" height="15" fill="#b8b8b8"/><path d="M1 10L8 13.5L15 10L8 6.5Z" fill="#d0d0d0" stroke="#9a9a9a"/><path d="M1 8L8 11.5L15 8L8 4.5Z" fill="#d0d0d0" stroke="#9a9a9a"/><path d="M1 6L8 9.5L15 6L8 2.5Z" fill="#d0d0d0" stroke="#9a9a9a"/><path d="M8 0V6M5.5 3.5L8 6L10.5 3.5" stroke="#9a9a9a" stroke-width="1.5" fill="none"/></svg>
<svg class="abs" style="left:332px;top:419px" width="17" height="15" viewBox="0 0 17 15"><path d="M0.5 6.5H16V14.5H0.5Z" fill="#fff" stroke="#000"/><path d="M2 9.5H15M2 12H15" stroke="#000" stroke-dasharray="1 1"/><path d="M4 0.5V6M2 4L4 6L6 4M12 0.5V6M10 4L12 6L14 4" stroke="#000" fill="none" stroke-width="1.3"/><path d="M1 1H16M1 3H16" stroke="#000" stroke-dasharray="1 2"/></svg>
<svg class="abs" style="left:367px;top:421px" width="12" height="11" viewBox="0 0 12 11"><path d="M1.5 1L11 5.5L1.5 10Z" fill="#28a028" stroke="#000" stroke-width="1"/></svg>
<div class="abs" style="left:393px;top:422px;width:10px;height:10px;background:#8a8a8a"></div>
<svg class="abs" style="left:415px;top:419px" width="17" height="15" viewBox="0 0 17 15"><path d="M3.5 0.5H10L13.5 4V14.5H3.5Z" fill="#fff" stroke="#000"/><path d="M10 0.5V4H13.5" fill="none" stroke="#000"/><path d="M6 6H11M6 8.5H11M6 11H11" stroke="#2a5ab0" stroke-width="1.2"/><circle cx="3" cy="8" r="2.3" fill="#d02010"/></svg>
<svg class="abs" style="left:439px;top:419px" width="17" height="15" viewBox="0 0 17 15"><path d="M3.5 0.5H10L13.5 4V14.5H3.5Z" fill="#fff" stroke="#000"/><path d="M10 0.5V4H13.5" fill="none" stroke="#000"/><path d="M6 6H11M6 8.5H11M6 11H11" stroke="#2a5ab0" stroke-width="1.2"/><path d="M0.5 4.5L8.5 13.5M8.5 4.5L0.5 13.5" stroke="#e02a10" stroke-width="2.2"/></svg>
<svg class="abs" style="left:465px;top:419px" width="17" height="15" viewBox="0 0 17 15"><path d="M5.5 0.5H11L14.5 4V14.5H5.5Z" fill="#c0c0c0" stroke="#9a9a9a"/><path d="M7.5 6H12.5M7.5 8.5H12.5M7.5 11H12.5" stroke="#9a9a9a" stroke-width="1.2"/><path d="M4 10H1.5V5.5H5" fill="none" stroke="#9a9a9a" stroke-width="1.2"/><path d="M3 8.5L5 10L3 11.5" fill="none" stroke="#9a9a9a"/></svg>
<svg class="abs" style="left:490px;top:419px" width="17" height="15" viewBox="0 0 17 15"><path d="M2.5 0.5H8L11 3.5V10.5H2.5Z" fill="#c0c0c0" stroke="#9a9a9a"/><path d="M6.5 4.5H12L15.5 8V14.5H6.5Z" fill="#c0c0c0" stroke="#9a9a9a"/><path d="M8.5 9H13.5M8.5 11H13.5M8.5 13H13.5" stroke="#9a9a9a" stroke-width="1.1"/><path d="M1 6.5V9.5H5M3.5 8L5 9.5L3.5 11" fill="none" stroke="#9a9a9a" stroke-width="1.2"/></svg>
<svg class="abs" style="left:514px;top:419px" width="17" height="15" viewBox="0 0 17 15"><path d="M0.5 0.5H6L9.5 4V14.5H0.5Z" fill="#c0c0c0" stroke="#9a9a9a"/><path d="M2.5 6H7.5M2.5 8.5H7.5M2.5 11H7.5" stroke="#9a9a9a" stroke-width="1.2"/><path d="M10 14.5H13V1M11 3L13 0.5L15 3" fill="none" stroke="#9a9a9a" stroke-width="1.2"/></svg>
<svg class="abs" style="left:539px;top:419px" width="17" height="15" viewBox="0 0 17 15"><path d="M6.5 0.5H12L15.5 4V14.5H6.5Z" fill="#c0c0c0" stroke="#9a9a9a"/><path d="M8.5 6H13.5M8.5 8.5H13.5M8.5 11H13.5" stroke="#9a9a9a" stroke-width="1.2"/><path d="M3 0.5V14M1 11.5L3 14L5 11.5" fill="none" stroke="#9a9a9a" stroke-width="1.2"/></svg>
<svg class="abs" style="left:601px;top:420px" width="14" height="13" viewBox="0 0 14 13" fill="#fff" stroke="#000" stroke-width="1.3"><rect x="0.7" y="0.7" width="12" height="11.5"/><path d="M6.7 0.7V12.2M0.7 6.5H12.7"/></svg>
<svg class="abs" style="left:623px;top:420px" width="14" height="13" viewBox="0 0 14 13" fill="#fff" stroke="#000" stroke-width="1.3"><rect x="0.7" y="0.7" width="12" height="11.5"/><path d="M6.7 0.7V12.2"/></svg>
<svg class="abs" style="left:645.5px;top:420px" width="14" height="13" viewBox="0 0 14 13" fill="#fff" stroke="#000" stroke-width="1.3"><rect x="0.7" y="0.7" width="12" height="11.5"/><path d="M0.7 6.5H12.7"/></svg>
<svg class="abs" style="left:669px;top:420px" width="13" height="13" viewBox="0 0 13 13" fill="#fff" stroke="#000" stroke-width="1.3"><rect x="4.2" y="0.7" width="7.5" height="6"/><rect x="0.7" y="4.7" width="7.5" height="6.5"/></svg>
<div class="abs" style="left:687px;top:415px;width:23px;height:23px;border:1px solid;border-color:#808080 #fff #fff #808080;background:#d6d6d6;box-shadow:inset 1px 1px 0 #a0a0a0"></div>
<svg class="abs" style="left:692px;top:420px" width="13" height="14" viewBox="0 0 13 14" fill="#fff" stroke="#000" stroke-width="1.5"><rect x="0.8" y="0.8" width="11.5" height="12"/><path d="M0.8 1.5H12.3" stroke-width="2"/></svg>
<div class="code" style="left:63.5px;top:448.5px;width:620px;height:446px;overflow:hidden"><span style="color:#1a1a9c">function</span> [residual, xhatOut] = AERO_EXTKALMAN(meas, deltat)
<span style="color:#24902a">%AERO_EXTKALMAN Radar Data Processing Tracker Using an Extended Kalman Filter</span>
<span style="color:#24902a">%</span>
<span style="color:#24902a">%  deltat is a Simulink parameter that is initialized from the workspace.</span>

<span style="color:#24902a">% Initialization</span>
<span style="color:#1a1a9c">persistent</span> P;
<span style="color:#1a1a9c">persistent</span> xhat;
<span style="color:#1a1a9c">if</span> isempty(P)
    xhat = [0.001; 0.01; 0.001; 400];
    P = zeros(4);
<span style="color:#1a1a9c">end</span>

<span style="color:#24902a">% 1. Compute Phi, Q, and R</span>
Phi = [1 deltat 0 0; 0 1 0 0 ; 0 0 1 deltat; 0 0 0 1];
Q =  diag([0 .005 0 .005]);
R =  diag([300^2 0.001^2]);

<span style="color:#24902a">% 2. Propagate the covariance matrix:</span>
P = Phi*P*Phi' + Q;

<span style="color:#24902a">% 3. Propagate the track estimate::</span>
xhat = Phi*xhat;

<span style="color:#24902a">% 4 a). Compute observation estimates:</span>
Rangehat = sqrt(xhat(1)^2+xhat(3)^2);
Bearinghat = atan2(xhat(3),xhat(1));
</div>
<div class="ln" style="left:11px;top:448.5px;width:19px">1
2
3
4
5
6
7
8
9
10
11
12
13
14
15
16
17
18
19
20
21
22
23
24
25
26
27
28</div>
<div class="ln" style="left:34px;top:448.5px;width:12px;text-align:center">





&ndash;
&ndash;
&ndash;
&ndash;
&ndash;
&ndash;


&ndash;
&ndash;
&ndash;


&ndash;


&ndash;


&ndash;
&ndash;
</div>
<div class="abs" style="left:663px;top:447px;width:1px;height:447px;background:#e8e8e8"></div>
<div class="abs" style="left:687px;top:447px;width:16px;height:447px;background-color:#e8e8e8;background-image:linear-gradient(45deg,#d0d0d0 25%,transparent 25%,transparent 75%,#d0d0d0 75%),linear-gradient(45deg,#d0d0d0 25%,transparent 25%,transparent 75%,#d0d0d0 75%);background-size:2px 2px;background-position:0 0,1px 1px;"></div>
<div class="abs" style="left:687px;top:447px;width:16px;height:16px;background:#d6d6d6;border:1px solid;border-color:#d6d6d6 #404040 #404040 #d6d6d6;box-shadow:inset 1px 1px 0 #fff,inset -1px -1px 0 #808080"></div>
<div class="abs" style="left:687px;top:463px;width:16px;height:227px;background:#d6d6d6;border:1px solid;border-color:#d6d6d6 #404040 #404040 #d6d6d6;box-shadow:inset 1px 1px 0 #fff,inset -1px -1px 0 #808080"></div>
<div class="abs" style="left:687px;top:878px;width:16px;height:16px;background:#d6d6d6;border:1px solid;border-color:#d6d6d6 #404040 #404040 #d6d6d6;box-shadow:inset 1px 1px 0 #fff,inset -1px -1px 0 #808080"></div>
<svg class="abs" style="left:690.5px;top:452px" width="9" height="6"><path d="M4.5 1L8.5 5H0.5Z" fill="#404040"/></svg>
<svg class="abs" style="left:690.5px;top:883px" width="9" height="6"><path d="M0.5 1H8.5L4.5 5Z" fill="#404040"/></svg>
<div class="abs" style="left:47px;top:894px;width:640px;height:16px;background-color:#e8e8e8;background-image:linear-gradient(45deg,#d0d0d0 25%,transparent 25%,transparent 75%,#d0d0d0 75%),linear-gradient(45deg,#d0d0d0 25%,transparent 25%,transparent 75%,#d0d0d0 75%);background-size:2px 2px;background-position:0 0,1px 1px;"></div>
<div class="abs" style="left:11px;top:894px;width:51px;height:16px;background:#d6d6d6"></div>
<div class="abs" style="left:62px;top:894px;width:16px;height:16px;background:#d6d6d6;border:1px solid;border-color:#d6d6d6 #404040 #404040 #d6d6d6;box-shadow:inset 1px 1px 0 #fff,inset -1px -1px 0 #808080"></div>
<div class="abs" style="left:78px;top:894px;width:549px;height:16px;background:#d6d6d6;border:1px solid;border-color:#d6d6d6 #404040 #404040 #d6d6d6;box-shadow:inset 1px 1px 0 #fff,inset -1px -1px 0 #808080"></div>
<div class="abs" style="left:671px;top:894px;width:16px;height:16px;background:#d6d6d6;border:1px solid;border-color:#d6d6d6 #404040 #404040 #d6d6d6;box-shadow:inset 1px 1px 0 #fff,inset -1px -1px 0 #808080"></div>
<svg class="abs" style="left:67px;top:897px" width="6" height="10"><path d="M1 5L5 1V9Z" fill="#404040"/></svg>
<svg class="abs" style="left:676px;top:897px" width="6" height="10"><path d="M5 5L1 1V9Z" fill="#404040"/></svg>
<div class="abs" style="left:687px;top:894px;width:16px;height:16px;background:#d6d6d6"></div>
<div class="abs" style="left:4px;top:921px;width:250px;height:18px;border:1px solid;border-color:#808080 #fff #fff #808080"></div>
<div class="abs" style="left:256px;top:921px;width:111px;height:18px;border:1px solid;border-color:#808080 #fff #fff #808080"></div>
<div class="mi" style="left:8.5px;top:925px">Ready</div>
<div class="mi" style="left:260px;top:925px">Ln</div>
<div class="mi" style="left:284px;top:925px">20</div>
<div class="mi" style="left:313.5px;top:925px">Col</div>
<div class="mi" style="left:340px;top:925px">20</div>
<svg class="abs" style="left:697px;top:927px" width="14" height="14" viewBox="0 0 14 14"><path d="M12 2L2 12M12 6L6 12M12 10L10 12" stroke="#808080" stroke-width="1.2"/><path d="M13 3L3 13M13 7L7 13M13 11L11 13" stroke="#fff" stroke-width="1"/></svg>
</body></html>
